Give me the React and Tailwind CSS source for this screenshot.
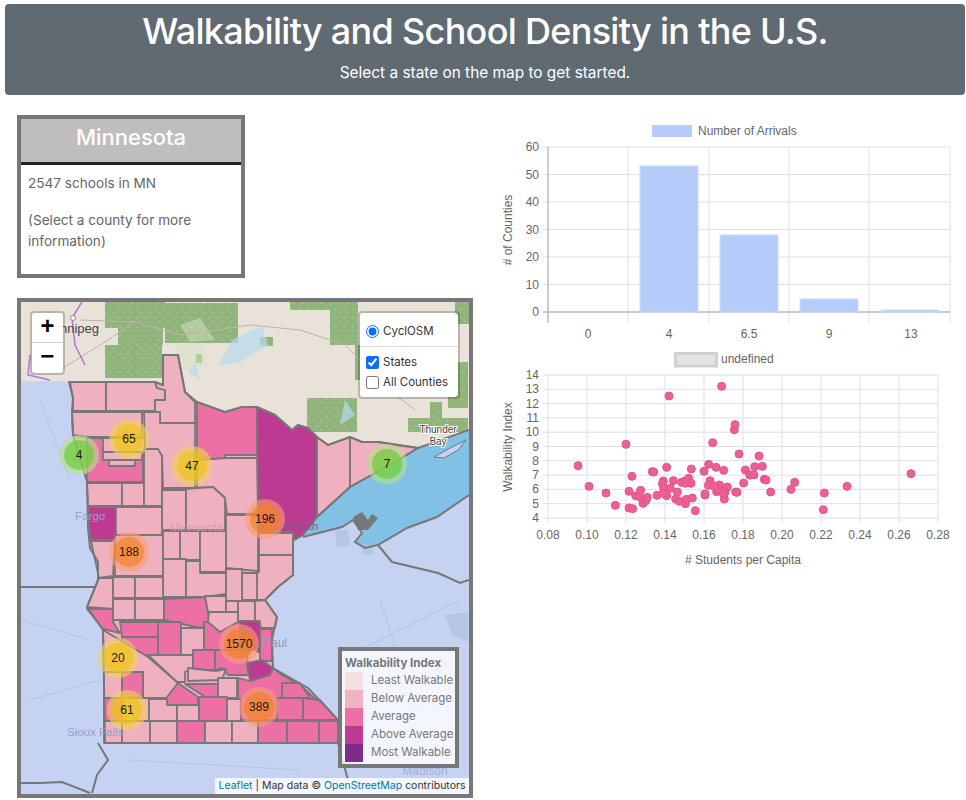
import { useState } from 'react';

const PALE = '#efb0bf';
const AVG = '#ec6fa6';
const ABOVE = '#bc3a91';
const MOST = '#7b2c86';

// county shapes, in page coordinates
const counties = [
  // north-west corner
  ['70,382 106,382 106,411 73,411 73,398', PALE],
  ['106,382 155,382 157,388 165,390 165,400 155,400 155,411 106,411', PALE],
  ['163,355 178,355 185,392 195,402 195,423 160,423 160,412 155,412 155,400 165,400 165,390 157,388 155,382 163,385', PALE],
  ['72,412 142,412 142,437 87,437 73,435', PALE],
  ['87,438 143,438 143,482 87,482', AVG],
  ['103,438 145,438 145,452 103,452', PALE],
  ['103,452 142,452 142,460 103,460', PALE],
  ['109,460 135,460 135,466 109,466', PALE],
  ['144,412 160,412 160,423 195,423 195,488 163,488 162,455 145,448', PALE],
  // north-east
  ['197,402 225,412 242,407 257,407 257,455 225,455 225,460 197,460', AVG],
  ['257,407 275,415 292,430 298,425 308,428 317,437 317,517 303,535 294,540 293,532 258,532', ABOVE],
  ['317,437 328,445 350,437 350,487 317,517', PALE],
  ['350,437 362,442 378,442 418,448 395,462 350,487', PALE],
  ['197,460 227,458 257,458 258,514 227,514 225,498 213,487 197,488', PALE],
  // middle
  ['87,483 122,483 122,506 88,506', PALE],
  ['122,483 144,483 144,506 122,506', PALE],
  ['144,449 158,449 162,456 162,506 144,506', PALE],
  ['162,490 186,490 186,530 162,530', PALE],
  ['186,489 197,488 213,487 225,498 225,530 186,530', PALE],
  ['226,515 258,515 258,571 226,568', PALE],
  ['88,507 116,507 116,540 90,540', ABOVE],
  ['116,507 162,507 162,535 116,535', PALE],
  ['91,541 115,541 113,576 99,578', PALE],
  ['115,535 163,535 163,576 115,576', PALE],
  ['163,531 180,531 180,559 163,559', PALE],
  ['180,531 200,531 200,560 180,560', PALE],
  ['200,531 226,531 226,572 200,572', PALE],
  ['259,533 293,533 293,555 259,555', PALE],
  ['259,555 293,555 293,575 278,587 265,600 256,600 257,573 259,572', PALE],
  ['242,573 257,573 257,600 242,600', PALE],
  ['226,569 242,569 242,602 226,602', PALE],
  ['163,559 186,559 186,597 163,597', PALE],
  ['186,561 200,561 200,573 226,573 226,594 205,597 186,597', PALE],
  ['99,578 113,578 113,609 87,607', PALE],
  ['113,577 135,577 135,598 113,598', PALE],
  ['135,577 163,577 163,598 135,598', PALE],
  ['113,599 135,599 135,620 113,620', PALE],
  ['135,599 164,599 164,620 135,620', PALE],
  ['164,599 205,597 210,623 201,628 164,620', AVG],
  ['205,596 226,596 226,612 208,612', PALE],
  ['226,601 238,601 238,612 226,612', PALE],
  ['238,601 255,601 255,621 238,621', PALE],
  ['255,601 265,600 277,617 275,628 262,628 255,621', PALE],
  // minnesota river and south
  ['87,609 113,609 113,622 120,633 103,629', AVG],
  ['120,622 158,622 158,637 122,637', AVG],
  ['122,637 158,637 158,655 146,655 140,660 122,646', AVG],
  ['103,630 148,657 177,682 177,698 143,698 143,672 104,672', PALE],
  ['158,622 181,622 181,655 158,655', AVG],
  ['181,628 204,628 204,655 181,655', PALE],
  ['204,622 240,622 240,650 204,650', AVG],
  ['209,612 238,612 238,622 220,632 208,622', PALE],
  ['240,621 260,621 260,650 240,650', ABOVE],
  ['257,642 261,642 261,652 257,652', MOST],
  ['260,629 272,629 272,661 260,661', AVG],
  ['148,655 193,655 193,668 185,672 185,682 177,682', PALE],
  ['193,650 215,650 215,670 193,670', AVG],
  ['215,650 248,650 247,668 250,675 228,675 222,668 215,670', AVG],
  ['188,668 215,671 226,669 222,680 188,681', PALE],
  ['218,678 237,678 237,698 218,698', PALE],
  ['238,678 250,681 270,675 273,668 282,675 300,685 338,720 238,720', AVG],
  ['282,683 300,683 310,698 282,698', AVG],
  ['303,698 320,700 338,720 303,720', AVG],
  ['277,698 303,698 303,720 277,720', AVG],
  ['247,663 262,660 273,668 270,675 250,681', ABOVE],
  ['104,672 122,672 122,698 104,698', PALE],
  ['122,672 143,672 143,698 122,698', AVG],
  ['104,698 122,698 122,721 104,721', AVG],
  ['122,698 149,698 149,721 122,721', PALE],
  ['149,699 177,699 177,721 149,721', PALE],
  ['167,697 178,683 198,697 198,705 167,705', AVG],
  ['185,684 218,684 218,695 213,702', AVG],
  ['177,705 199,705 199,721 177,721', PALE],
  ['199,697 227,697 227,721 199,721', AVG],
  ['227,699 241,699 241,721 227,721', PALE],
  // bottom row
  ['104,721 122,721 122,743 104,743', PALE],
  ['122,721 150,721 150,743 122,743', PALE],
  ['150,721 177,721 177,743 150,743', PALE],
  ['177,721 205,721 205,743 177,743', AVG],
  ['205,721 232,721 232,743 205,743', PALE],
  ['232,721 258,721 258,743 232,743', PALE],
  ['258,721 287,721 287,743 258,743', AVG],
  ['287,721 319,721 319,743 287,743', AVG],
  ['319,721 338,721 338,743 319,743', AVG],
];

const stateOutline = '69,382 155,382 163,385 163,355 178,355 185,392 197,402 225,412 242,407 257,407 275,415 292,430 298,425 308,428 317,437 328,445 350,437 362,442 378,442 418,448 395,462 350,487 317,517 303,535 294,540 293,538 293,575 278,587 265,600 277,617 275,625 272,640 273,668 308,688 338,720 338,743 105,743 103,630 87,607 98,580 98,562 90,548 88,528 87,482 73,435 72,412 73,398';

const greens = [
  [105, 345, 57, 33], [165, 303, 73, 40], [105, 302, 60, 26], [330, 302, 28, 43], [290, 302, 40, 8],
  [307, 398, 50, 34], [355, 345, 24, 35], [408, 418, 60, 14], [448, 362, 20, 46], [260, 337, 13, 9],
  [196, 354, 6, 9], [118, 328, 45, 17], [430, 402, 12, 16], [455, 302, 14, 22],
];

const clusters = [
  [79, 455, '4', 'green'], [129, 439, '65', 'yellow'], [192, 466, '47', 'yellow'], [387, 464, '7', 'green'],
  [265, 519, '196', 'orange'], [129, 552, '188', 'orange'], [239, 644, '1570', 'orange'],
  [118, 658, '20', 'yellow'], [127, 710, '61', 'yellow'], [259, 707, '389', 'orange'],
];

const clusterColors = {
  green: ['rgba(181,226,140,0.6)', 'rgba(110,204,57,0.7)'],
  yellow: ['rgba(241,211,87,0.6)', 'rgba(240,194,12,0.6)'],
  orange: ['rgba(253,156,115,0.6)', 'rgba(241,128,23,0.6)'],
};

const legendRows = [
  ['Least Walkable', 'bg-[#f3dfe1]'],
  ['Below Average', 'bg-[#f1b3c4]'],
  ['Average', 'bg-[#ec70a7]'],
  ['Above Average', 'bg-[#bc3a91]'],
  ['Most Walkable', 'bg-[#7b2c86]'],
];

// scatter points were read off the chart at 3x
const scatterPoints = [
  [264,362],[297,424],[348,444],[376,481],[408,298],[417,439],[417,489],[428,491],[426,394],[437,452],[452,436],[448,455],
  [459,475],[467,467],[472,457],[487,380],[491,381],[501,451],[520,408],[517,416],[521,430],[530,452],[520,445],[541,430],
  [530,367],[537,153],[550,407],[562,441],[557,462],[568,469],[586,476],[589,463],[607,459],[616,497],[575,412],[585,408],
  [596,400],[603,415],[604,372],[586,415],[642,379],[645,450],[645,447],[656,358],[660,407],[655,421],[668,293],[678,367],
  [701,376],[695,124],[733,254],[735,239],[747,327],[761,414],[766,375],[779,390],[781,390],[792,390],[794,365],[817,364],
  [807,333],[823,403],[828,405],[842,441],[903,433],[914,412],[1003,444],[1000,494],[1071,424],[1263,386],[737,441],[741,442],
  [712,426],[705,441],[703,462],[688,420],[680,440],[686,435],[672,423],[700,445],
];

const MapDrawing = () => (
  <svg viewBox="21 302 448 492" className="block w-[448px] h-[492px] [font-family:'Liberation_Sans',sans-serif]">
    <defs>
      <pattern id="forest" width="9" height="9" patternUnits="userSpaceOnUse">
        <rect width="9" height="9" fill="#91b47a" />
        <rect width="3" height="2" x="1" y="2" fill="#9dbc88" />
        <rect width="2" height="1" x="5" y="6" fill="#a3c6b4" />
      </pattern>
    </defs>
    <rect x="21" y="302" width="448" height="492" fill="#e9e2d9" />
    {greens.map(([x, y, w, h], i) => (
      <rect key={i} x={x} y={y} width={w} height={h} fill="url(#forest)" />
    ))}
    <path d="M178 345 L200 343 L207 365 L172 372 Z M180 325 L200 318 L215 340 L190 342 Z" fill="#d6e2c4" opacity="0.5" />
    <path d="M232 340 L262 326 L268 345 L240 362 L218 366 Z M345 400 L355 415 L340 425 Z M188 372 L196 362 L200 380 Z" fill="#b5dbee" opacity="0.7" />
    <path d="M80 320 L135 322 L180 335 L250 325 L300 330 L345 345 L395 395 L415 410 M60 370 L100 345 L135 322" fill="none" stroke="#bdb5aa" strokeWidth="1" />
    <path d="M82 302 L72 318 L75 345 L85 365 M30 355 L28 375 L50 380" fill="none" stroke="#b374dd" strokeWidth="1.5" />
    <circle cx="73" cy="318" r="2.5" fill="#fff" stroke="#888" />

    {/* the U.S. side, under its blue tint */}
    <polygon points="21,381 155,382 163,385 163,355 178,355 185,392 197,402 225,412 242,407 257,407 275,415 292,430 298,425 308,428 317,437 328,445 350,437 362,442 378,442 418,448 469,430 469,794 21,794" fill="#c5d2f2" />
    <polygon points="418,448 469,430 469,495 437,517 407,528 378,545 365,548 355,542 362,533 353,520 342,527 303,537 317,517 350,487 395,462" fill="#82c1e6" />
    <path d="M335 530 L348 530 L350 546 L337 547 Z M362 543 L372 545 L373 555 L363 555 Z M445 615 L468 612 L468 642 L452 635 Z" fill="#a8bfd8" opacity="0.6" />
    <path d="M434 457 L452 447 L466 440 L458 450 L444 458 Z" fill="#c5d2f2" stroke="#777" strokeWidth="1" />
    <path d="M353 517 L362 512 L368 520 L372 514 L378 518 L368 530 L358 530 Z" fill="#777" />
    <path d="M40 400 L70 480 M21 620 L90 640 M30 700 L100 680 M380 600 L420 720 M360 650 L460 600 M130 760 L300 770" fill="none" stroke="#b4c3e6" strokeWidth="1" />
    <path d="M21 587 L98 587 M98 743 L108 760 L97 775 L92 793 M21 783 L40 783 L62 782 L90 793 M338 743 L348 780 M378 545 L392 562 L438 573 L460 583 L469 580 M418 448 L469 430 M303 537 L342 527 L353 520 L362 533 L355 542 L365 548 L378 545 L407 528 L437 517 L469 495" fill="none" stroke="#777" strokeWidth="2" />

    <text x="60" y="333" fontSize="13" fill="#444">nnipeg</text>
    <text x="438" y="433" fontSize="10" fill="#444" textAnchor="middle" stroke="#fff" strokeWidth="2" paintOrder="stroke">Thunder</text>
    <text x="438" y="445" fontSize="10" fill="#444" textAnchor="middle" stroke="#fff" strokeWidth="2" paintOrder="stroke">Bay</text>
    <text x="425" y="775" fontSize="12" fill="#a4b0d6" textAnchor="middle">Madison</text>

    <polygon points={stateOutline} fill={PALE} />
    {counties.map(([points, fill], i) => (
      <polygon key={i} points={points} fill={fill} stroke="#777" strokeWidth="1.8" strokeLinejoin="round" />
    ))}
    <polygon points={stateOutline} fill="none" stroke="#777" strokeWidth="2" strokeLinejoin="round" />

    <text x="75" y="520" fontSize="11.5" fill="#9aa5c6">Fargo</text>
    <text x="67" y="736" fontSize="11.5" fill="#96a3cc">Sioux Falls</text>
    <text x="170" y="531" fontSize="11.5" fill="#d99fb4">Minnesota</text>
    <text x="285" y="530" fontSize="11.5" fill="#7a5a8a">Duluth</text>
    <text x="263" y="647" fontSize="12" fill="#8d9ac2">Paul</text>

    {clusters.map(([x, y, label, color]) => (
      <g key={label}>
        <circle cx={x} cy={y} r="20" fill={clusterColors[color][0]} />
        <circle cx={x} cy={y} r="15" fill={clusterColors[color][1]} />
        <text x={x} y={y + 4} fontSize="12" fill="#1a1a1a" textAnchor="middle">{label}</text>
      </g>
    ))}
  </svg>
);

const ZoomControl = () => (
  <div className="absolute left-[9px] top-[9px] w-[35px] rounded border-2 border-black/20 bg-clip-padding [font-family:'Liberation_Mono',monospace]">
    <div className="h-[30px] flex items-center justify-center bg-white rounded-t-sm border-b border-[#ccc] text-[24px] font-bold text-black">+</div>
    <div className="h-[30px] flex items-center justify-center bg-white rounded-b-sm text-[24px] font-bold text-black">−</div>
  </div>
);

const LayersControl = () => {
  const [states, setStates] = useState(true);
  const [allCounties, setAllCounties] = useState(false);
  return (
    <div className="absolute right-[9px] top-[9px] w-[102px] rounded border-2 border-black/20 bg-clip-padding">
      <div className="bg-white rounded-sm pl-[6px] pt-[8px] pb-[5px] text-[11.5px] leading-[20px] text-[#333] font-[Inter,sans-serif]">
        <label className="flex items-center gap-[4px] h-[20px]">
          <input type="radio" name="base" defaultChecked className="w-[13px] h-[13px] accent-[#0d6efd]" />
          CyclOSM
        </label>
        <div className="border-t border-[#ddd] -ml-[6px] mt-[5px] mb-[5px]" />
        <label className="flex items-center gap-[4px] h-[20px]">
          <input type="checkbox" checked={states} onChange={() => setStates(!states)} className="w-[13px] h-[13px] accent-[#0d6efd]" />
          States
        </label>
        <label className="flex items-center gap-[4px] h-[20px]">
          <input type="checkbox" checked={allCounties} onChange={() => setAllCounties(!allCounties)} className="w-[13px] h-[13px] accent-[#0d6efd]" />
          All Counties
        </label>
      </div>
    </div>
  );
};

const Legend = () => (
  <div className="absolute right-[10px] bottom-[26px] w-[121px] h-[121px] border-4 border-[#777] bg-white/80 pl-[3px] pt-[3px] text-[11.5px] text-[#777] font-[Inter,sans-serif]">
    <div className="font-bold h-[18px] leading-[18px] whitespace-nowrap">Walkability Index</div>
    {legendRows.map(([label, swatch]) => (
      <div key={label} className="flex items-center h-[18px]">
        <span className={`w-[18px] h-[18px] mr-[8px] ${swatch}`} />
        <span className="whitespace-nowrap">{label}</span>
      </div>
    ))}
  </div>
);

const BarChart = () => {
  const xs = [548, 628, 709, 789, 869, 950];
  const ys = [147, 174.5, 202, 229.5, 257, 284.5, 312];
  const bars = [[640, 166], [720, 235], [800, 299], [881, 310]];
  const xLabels = [['0', 588], ['4', 669], ['6.5', 749], ['9', 829], ['13', 911]];
  return (
    <svg viewBox="490 115 476 225" className="block w-[476px] h-[225px] [font-family:'Liberation_Sans',sans-serif]">
      <rect x="652" y="125" width="40" height="12" fill="#b5ccfb" />
      <text x="698" y="135" fontSize="12" fill="#666">Number of Arrivals</text>
      {ys.map((y) => <line key={y} x1="543" x2="950" y1={y} y2={y} stroke="#e0e0e0" />)}
      {xs.map((x) => <line key={x} x1={x} x2={x} y1="147" y2="323" stroke="#e0e0e0" />)}
      <line x1="548" x2="548" y1="147" y2="323" stroke="#aaa" />
      <line x1="543" x2="950" y1="312" y2="312" stroke="#aaa" />
      {bars.map(([x, top]) => (
        <rect key={x} x={x} y={top} width="58" height={312 - top} fill="#b5ccfb" stroke="#c9d9fc" />
      ))}
      {[60, 50, 40, 30, 20, 10, 0].map((v, i) => (
        <text key={v} x="539" y={ys[i] + 4} fontSize="12" fill="#666" textAnchor="end">{v}</text>
      ))}
      {xLabels.map(([label, x]) => (
        <text key={label} x={x} y="338" fontSize="12" fill="#666" textAnchor="middle">{label}</text>
      ))}
      <text transform="translate(512 230) rotate(-90)" fontSize="12" fill="#666" textAnchor="middle"># of Counties</text>
    </svg>
  );
};

const ScatterChart = () => {
  const xTicks = [0.08, 0.1, 0.12, 0.14, 0.16, 0.18, 0.2, 0.22, 0.24, 0.26, 0.28];
  const yTicks = [14, 13, 12, 11, 10, 9, 8, 7, 6, 5, 4];
  return (
    <svg viewBox="490 345 476 230" className="block w-[476px] h-[230px] [font-family:'Liberation_Sans',sans-serif]">
      <rect x="675.5" y="353.5" width="41" height="12.5" fill="#e4e4e4" stroke="#d0d0d0" strokeWidth="3" />
      <text x="721" y="363" fontSize="12" fill="#666">undefined</text>
      {xTicks.map((v, i) => {
        const x = 548 + i * 39;
        return (
          <g key={v}>
            <line x1={x} x2={x} y1="375" y2="523" stroke="#e0e0e0" />
            <text x={x} y="539" fontSize="12" fill="#666" textAnchor="middle">{v.toFixed(2)}</text>
          </g>
        );
      })}
      {yTicks.map((v, i) => {
        const y = 375 + i * 14.3;
        return (
          <g key={v}>
            <line x1="543" x2="938" y1={y} y2={y} stroke="#e0e0e0" />
            <text x="539" y={y + 4} fontSize="12" fill="#666" textAnchor="end">{v}</text>
          </g>
        );
      })}
      {scatterPoints.map(([zx, zy], i) => (
        <circle key={i} cx={490 + zx / 3} cy={345 + zy / 3} r="4" fill="#ef5f97" stroke="#e0558c" />
      ))}
      <text x="743" y="564" fontSize="12" fill="#666" textAnchor="middle"># Students per Capita</text>
      <text transform="translate(512 447) rotate(-90)" fontSize="12" fill="#666" textAnchor="middle">Walkability Index</text>
    </svg>
  );
};

export default function App() {
  return (
    <div className="w-[966px] h-[800px] bg-white overflow-hidden font-[Inter,sans-serif]">
      <header className="ml-[5px] mr-[1px] mt-1 h-[91px] rounded bg-[#5f6a72] text-white text-center pt-[3px]">
        <h1 className="text-[36px] leading-[48px] font-medium tracking-[-0.7px]">Walkability and School Density in the U.S.</h1>
        <p className="text-[15.4px] leading-[24px] mt-[6px]">Select a state on the map to get started.</p>
      </header>

      <main className="flex">
        <div className="ml-[17px] w-[456px] shrink-0">
          <section className="mt-[20px] w-[228px] h-[163px] border-4 border-[#777]">
            <h2 className="h-[46px] bg-[#bfbebd] border-b-[3px] border-[#212529] text-white text-center text-[22px] leading-[36px] font-medium">Minnesota</h2>
            <div className="px-[7px] pt-[8px] text-[13.6px] leading-[21px] text-[#666]">
              <p>2547 schools in MN</p>
              <p className="mt-[16px]">(Select a county for more information)</p>
            </div>
          </section>

          <section className="relative mt-[20px] w-[456px] h-[500px] border-4 border-[#777] overflow-hidden">
            <MapDrawing />
            <ZoomControl />
            <LayersControl />
            <Legend />
            <div className="absolute right-0 bottom-0 h-[16px] w-[254px] bg-white/80 text-center text-[10.5px] leading-[16px] text-[#333] whitespace-nowrap">
              <span className="text-[#0078a8]">Leaflet</span> | Map data © <span className="text-[#0078a8]">OpenStreetMap</span> contributors
            </div>
          </section>
        </div>

        <div className="ml-[17px] w-[476px] shrink-0 pt-[20px] flex flex-col gap-[5px]">
          <BarChart />
          <ScatterChart />
        </div>
      </main>
    </div>
  );
}
